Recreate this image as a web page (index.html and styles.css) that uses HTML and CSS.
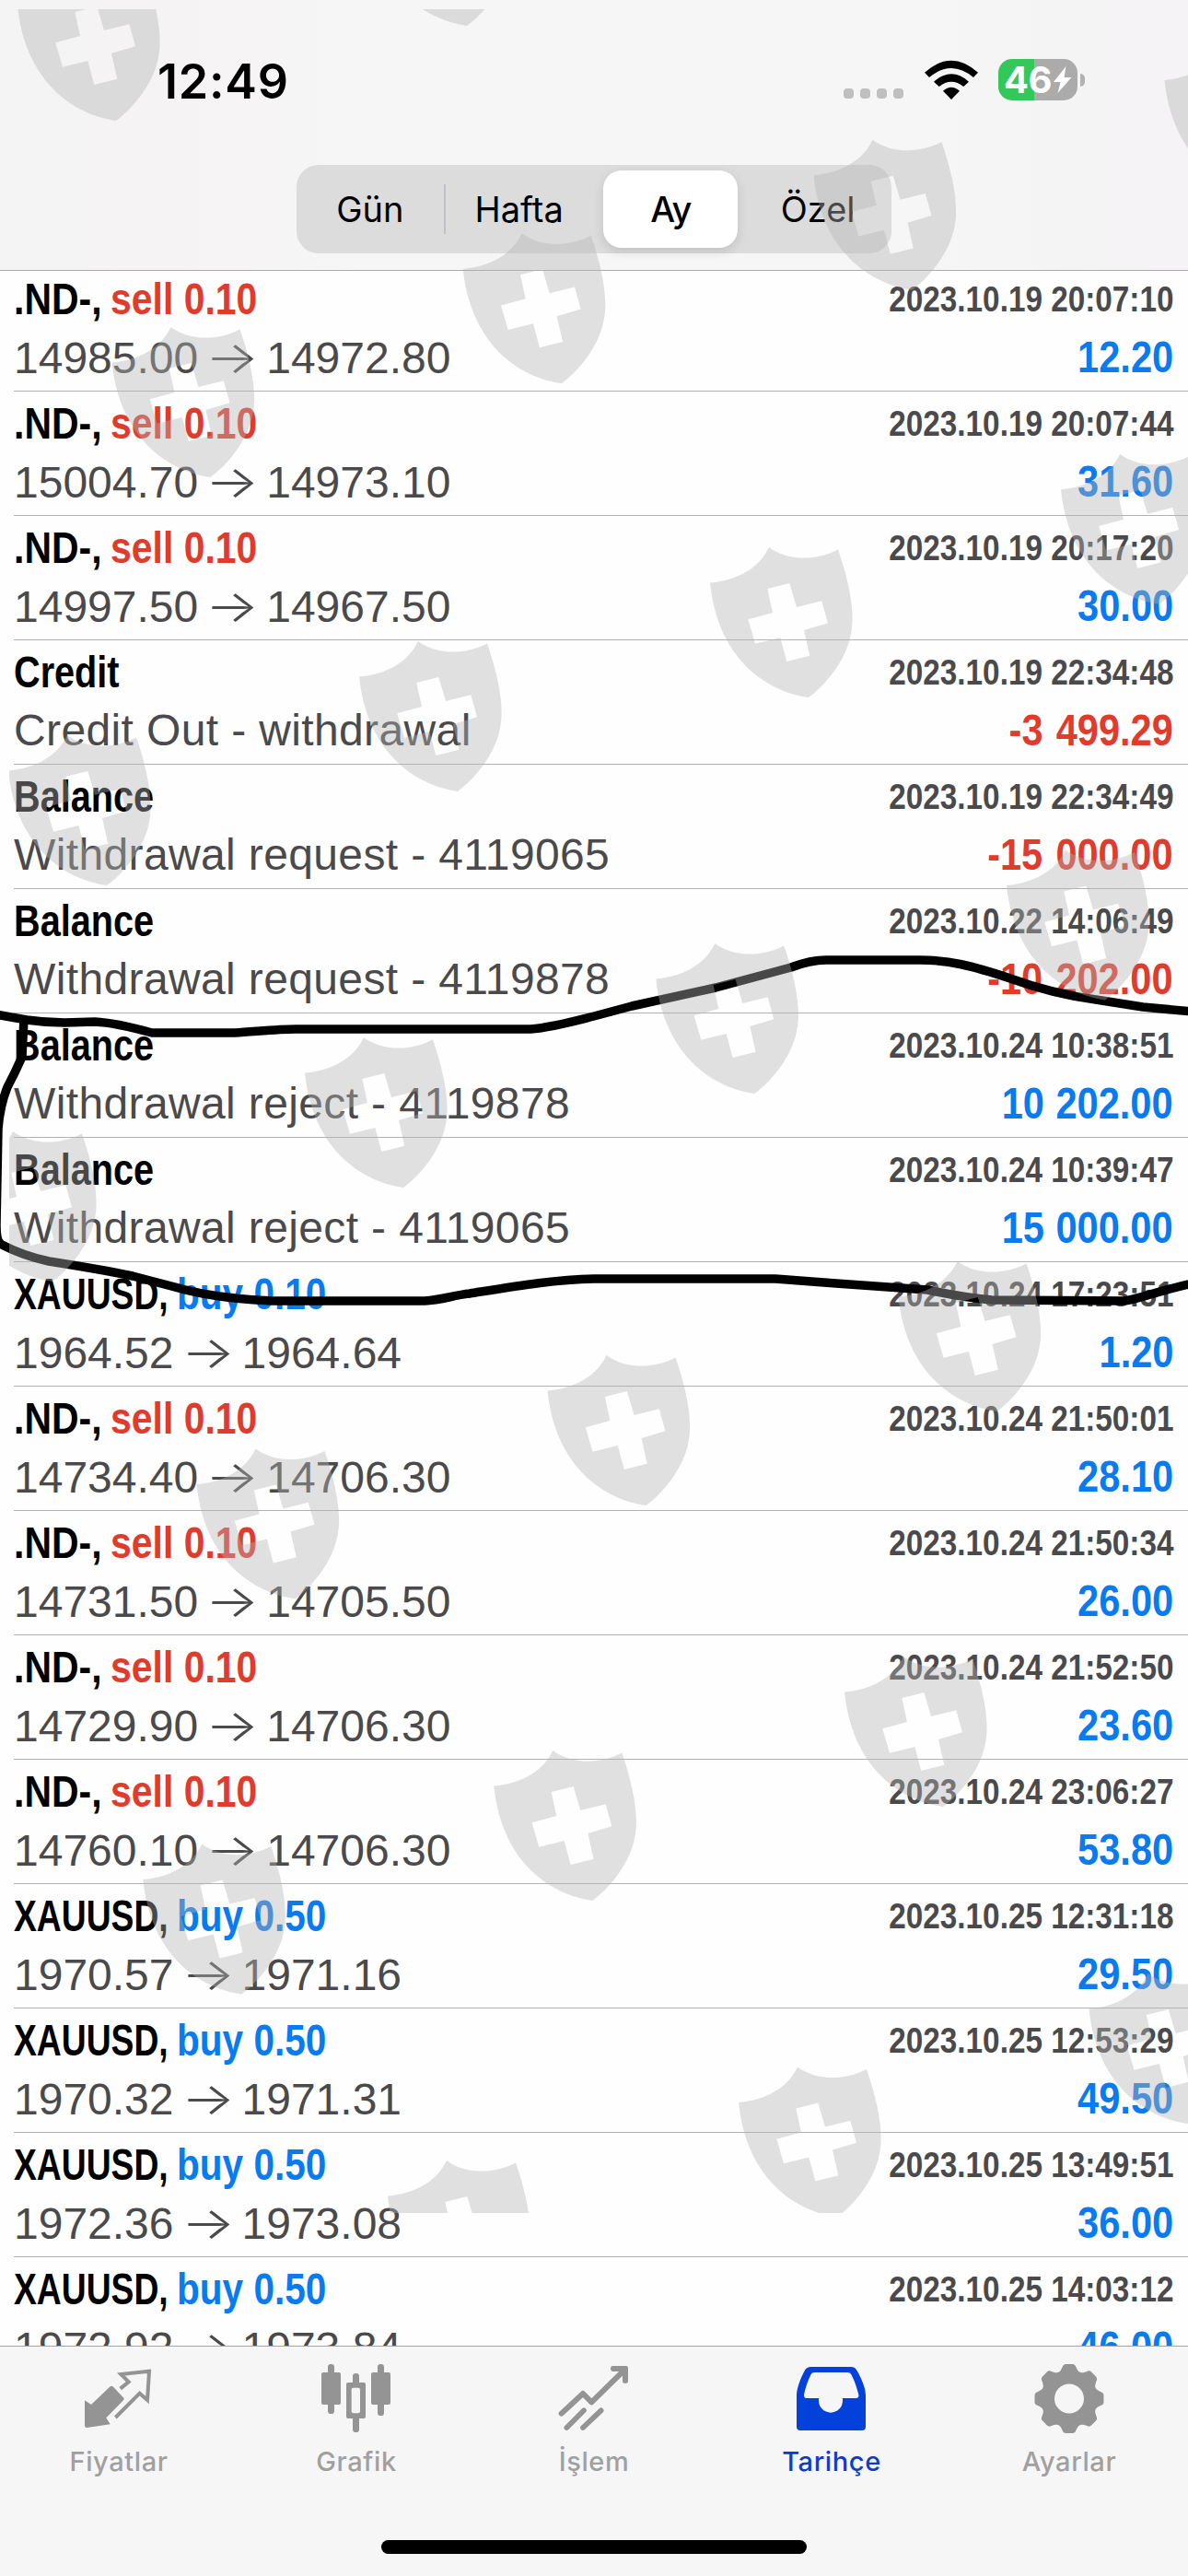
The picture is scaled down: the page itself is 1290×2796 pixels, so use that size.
FILE: index.html
```html
<!DOCTYPE html>
<html lang="tr">
<head>
    <meta charset="UTF-8">
    <meta name="viewport" content="width=device-width, initial-scale=1.0">
    <title>Tarihçe</title>
    <link rel="stylesheet" href="styles.css">
</head>
<body>
    <header class="header">
        <div class="status-bar">
            <div class="clock">12:49</div>
            <div class="status-icons">
                <div class="dots"><i></i><i></i><i></i><i></i></div>
                <svg class="wifi" width="58" height="44" viewBox="311 74 174 130">
                    <path d="M311 114 Q398 36 485 114 L470 130 Q398 70 326 130 Z"/>
                    <path d="M341 144 Q398 94 455 144 L438 160 Q398 128 358 160 Z"/>
                    <path d="M371 174 Q398 150 425 174 L398 202 Z"/>
                </svg>
                <div class="battery">
                    <span>46</span>
                    <svg width="22" height="32" viewBox="0 0 22 32"><path d="M14.5 1 L1 18 H8.500 L5.500 30 L20.500 13 H12.500 Z"/></svg>
                </div>
                <div class="battery-cap"></div>
            </div>
        </div>
        <div class="segments">
            <div class="segment">Gün</div>
            <div class="segment divided">Hafta</div>
            <div class="segment active"><span>Ay</span></div>
            <div class="segment">Özel</div>
        </div>
    </header>

    <main class="list" id="list"></main>

    <nav class="tabs">
        <div class="tab">
            <svg viewBox="27 21 240 240">
                <path class="fill" d="M36 151 L57 165 L119 106 Q124 102 129 107 L163 143 Q166 147 162 151 L106 208 L119 229 L43 240 Q36 240 36 233 Z"/>
                <path class="line thin" d="M152 113 L179 91 L154 66 L246 56 L240 150 L215 128 L136 207"/>
            </svg>
            <span>Fiyatlar</span>
        </div>
        <div class="tab">
            <svg viewBox="801 21 240 240">
                <rect class="fill" x="807" y="60" width="63" height="105" rx="6"/>
                <rect class="fill" x="828" y="33" width="21" height="162" rx="10"/>
                <rect class="fill" x="969" y="60" width="63" height="105" rx="6"/>
                <rect class="fill" x="990" y="33" width="21" height="168" rx="10"/>
                <rect class="fill" x="909" y="63" width="21" height="45" rx="10"/>
                <rect class="fill" x="909" y="195" width="21" height="60" rx="10"/>
                <rect class="fill" x="888" y="93" width="63" height="117" rx="6"/>
                <rect class="hole" x="905" y="110" width="28" height="83" rx="6"/>
            </svg>
            <span>Grafik</span>
        </div>
        <div class="tab">
            <svg viewBox="45 21 240 240">
                <path class="line" d="M59 194 L129 129 L157 157 L264 52"/>
                <path class="fill" d="M226 39 H270 Q276 39 276 45 V88 Q276 96 267 96 Q258 96 258 88 V57 H227 Q219 56 219 48 Q219 39 226 39 Z"/>
                <path class="line cut" d="M76 240 L132 184"/>
                <path class="line cut" d="M129 240 L188 184"/>
            </svg>
            <span>İşlem</span>
        </div>
        <div class="tab active">
            <svg viewBox="819 21 240 240">
                <path class="fill" fill-rule="evenodd" d="M872 42 H1002 Q1014 42 1020 52 C1036 78 1050 112 1050 135 V237 Q1050 249 1038 249 H837 Q825 249 825 237 V135 C825 112 838 78 852 53 Q858 42 872 42 Z M883 60 Q875 60 872 66 C861 88 853 112 849 133 Q848 144 857 144 H897 V152 A39 39 0 0 0 975 152 V144 H1020 Q1029 143 1027 133 C1021 112 1015 88 1003 67 Q999 60 991 60 Z"/>
            </svg>
            <span>Tarihçe</span>
        </div>
        <div class="tab">
            <svg viewBox="-40 -41.5 80 80">
                <g id="gear"></g>
                <circle class="fill" r="31"/>
                <circle class="hole" r="16"/>
            </svg>
            <span>Ayarlar</span>
        </div>
        <div class="home-bar"></div>
    </nav>

    <!-- marker strokes over the list -->
    <svg class="overlay" viewBox="0 0 1290 2796">
        <g class="marker">
            <path d="M-5 1101 L29 1107 Q50 1110 70 1110 L103 1109 Q125 1110 165 1121 L255 1121 C275 1120 300 1117 321 1117 L576 1117 C600 1115 625 1108 645 1103 L686 1092 L777 1072 L859 1050 Q880 1042 897 1042 L999 1042 C1030 1042 1055 1048 1097 1062 C1130 1074 1160 1081 1190 1085 L1241 1093 L1295 1098"/>
            <path d="M26 1106 L24 1147 Q16 1165 8 1180 Q0 1200 -2 1225 L-4 1330 Q-4 1348 2 1351 Q25 1363 53 1369 C85 1374 115 1379 144 1385 L190 1397 Q230 1409 296 1412 L461 1412 C480 1411 492 1406 510 1404 C560 1396 600 1389 645 1388 L842 1388 L908 1393 L1007 1400 Q1045 1408 1077 1411 L1221 1412 C1240 1409 1265 1399 1295 1393"/>
        </g>
    </svg>

    <svg class="overlay" viewBox="0 0 1290 2796">
        <defs>
            <clipPath id="area"><rect x="10" y="10" width="1280" height="2392"/></clipPath>
            <path id="shield" fill-rule="evenodd" d="M0 38.500 C30 36 54 22 64 0 C84 15 115 15 139 2.500 C151 37 158 72 153 94 C149 118 130 146 107 163 C58 156 8 118 0 38.500 Z M62.300 45 L68 71 L41.300 78.300 L49 104.700 L76.300 98 L83.300 124 L108.300 117.700 L102 90 L128 82.300 L121.300 58.300 L94 65 L86.300 39 Z"/>
        </defs>
        <g class="shields" id="shields" clip-path="url(#area)"></g>
    </svg>

    <script>
        const rows = [
            ['.ND-', 'sell 0.10', '14985.00', '14972.80', '2023.10.19 20:07:10', '12.20'],
            ['.ND-', 'sell 0.10', '15004.70', '14973.10', '2023.10.19 20:07:44', '31.60'],
            ['.ND-', 'sell 0.10', '14997.50', '14967.50', '2023.10.19 20:17:20', '30.00'],
            ['Credit', '', 'Credit Out - withdrawal', '', '2023.10.19 22:34:48', '-3 499.29'],
            ['Balance', '', 'Withdrawal request - 4119065', '', '2023.10.19 22:34:49', '-15 000.00'],
            ['Balance', '', 'Withdrawal request - 4119878', '', '2023.10.22 14:06:49', '-10 202.00'],
            ['Balance', '', 'Withdrawal reject - 4119878', '', '2023.10.24 10:38:51', '10 202.00'],
            ['Balance', '', 'Withdrawal reject - 4119065', '', '2023.10.24 10:39:47', '15 000.00'],
            ['XAUUSD', 'buy 0.10', '1964.52', '1964.64', '2023.10.24 17:23:51', '1.20'],
            ['.ND-', 'sell 0.10', '14734.40', '14706.30', '2023.10.24 21:50:01', '28.10'],
            ['.ND-', 'sell 0.10', '14731.50', '14705.50', '2023.10.24 21:50:34', '26.00'],
            ['.ND-', 'sell 0.10', '14729.90', '14706.30', '2023.10.24 21:52:50', '23.60'],
            ['.ND-', 'sell 0.10', '14760.10', '14706.30', '2023.10.24 23:06:27', '53.80'],
            ['XAUUSD', 'buy 0.50', '1970.57', '1971.16', '2023.10.25 12:31:18', '29.50'],
            ['XAUUSD', 'buy 0.50', '1970.32', '1971.31', '2023.10.25 12:53:29', '49.50'],
            ['XAUUSD', 'buy 0.50', '1972.36', '1973.08', '2023.10.25 13:49:51', '36.00'],
            ['XAUUSD', 'buy 0.50', '1972.92', '1973.84', '2023.10.25 14:03:12', '46.00']
        ];
        const nameClass = { '.ND-': 'nd', 'XAUUSD': 'xau' };

        document.getElementById('list').innerHTML = rows.map(([name, side, from, to, date, amount]) => `
            <div class="row">
                <div class="line-top">
                    <div class="symbol ${nameClass[name] || ''}"><b>${name}${side ? ',' : ''}</b></div>
                    <div class="side ${side.split(' ')[0]}">${side}</div>
                    <div class="date">${date}</div>
                </div>
                <div class="line-bottom">
                    <div class="detail ${to ? '' : 'note'}">${from}${to ? `<span class="arrow">→</span>${to}` : ''}</div>
                    <div class="amount ${amount[0] === '-' ? 'negative' : ''}">${amount}</div>
                </div>
            </div>`).join('');

        // watermark shields
        const spots = [
            [19, -32], [400, -135], [1264.5, 48.5],
            [883.5, 151.7], [502.7, 253.3], [121.5, 355],
            [1152, 492.7], [771, 594], [390, 696], [9, 798],
            [1093, 922.5], [712.3, 1024], [331, 1126], [-50, 1228],
            [975.5, 1369], [594.5, 1471], [213.5, 1572.5],
            [917, 1798], [536.3, 1900], [155.3, 2001.6],
            [1182.5, 2142], [802, 2243.5], [421, 2345]
        ];
        document.getElementById('shields').innerHTML =
            spots.map(([x, y]) => `<use href="#shield" x="${x}" y="${y}"/>`).join('');

        let teeth = '';
        for (let a = 0; a < 360; a += 45) {
            teeth += `<path class="fill" d="M-12.5 -27 Q-8.500 -31 -7.500 -34 Q-6.500 -37.500 -3.500 -37.500 H3.500 Q6.500 -37.500 7.500 -34 Q8.500 -31 12.500 -27 Z" transform="rotate(${a})"/>`;
        }
        document.getElementById('gear').innerHTML = teeth;
    </script>
</body>
</html>
```
FILE: styles.css
```css
* {
    box-sizing: border-box;
}
body {
    margin: 0;
    width: 1290px;
    height: 2796px;
    position: relative;
    display: flex;
    flex-direction: column;
    overflow: hidden;
    background: #fefefe;
    font-family: "Liberation Sans", Arial, sans-serif;
}
.header {
    height: 294px;
    background: linear-gradient(90deg, #f4f4f5, #f6f3f4 14%, #f6f6f6 30%, #f6f6f6 75%, #f5f3f5);
    border-bottom: 1px solid #acacac;
    font-family: Inter, sans-serif;
    display: flex;
    flex-direction: column;
    align-items: center;
    flex-shrink: 0;
}
.status-bar {
    width: 100%;
    height: 179px;
    padding: 59px 113px 0 171px;
    display: flex;
    justify-content: space-between;
}
.clock {
    font-size: 52px;
    line-height: 59px;
    font-weight: 600;
    letter-spacing: 0.8px;
}
.status-icons {
    display: flex;
    height: 55px;
    align-items: center;
}
.dots {
    display: flex;
    gap: 7px;
    margin: 29px 23px 0 0;
}
.dots i {
    width: 11px;
    height: 11px;
    border-radius: 4px;
    background: #bfbfbf;
}
.wifi {
    margin-right: 22px;
}
.battery {
    width: 86px;
    height: 45px;
    border-radius: 15px;
    background: linear-gradient(90deg, #34c759 39px, #ababab 39px);
    display: flex;
    align-items: center;
    padding-left: 6px;
    color: #fff;
    font-size: 40px;
    font-weight: 700;
    letter-spacing: -0.5px;
}
.battery svg {
    margin-left: 1px;
    fill: #fff;
}
.battery-cap {
    width: 5px;
    height: 14px;
    margin-left: 3px;
    margin-right: -1px;
    border-radius: 0 6px 6px 0;
    background: #b2b2b2;
}
.segments {
    width: 646px;
    height: 96px;
    border-radius: 24px;
    background: #dcdcdd;
    display: flex;
    align-items: center;
}
.segment {
    flex: 1;
    height: 84px;
    display: flex;
    align-items: center;
    justify-content: center;
    font-size: 38px;
    color: #000;
}
.segment.divided {
    height: 54px;
    padding-right: 5px;
    border-left: 2px solid #c0c0c6;
}
.segment.active span {
    width: 146px;
    height: 84px;
    line-height: 84px;
    text-align: center;
    border-radius: 20px;
    background: #fff;
    font-weight: 500;
    letter-spacing: -1px;
    box-shadow: 0 4px 12px rgba(0,0,0,0.12);
}
.list {
    flex: 1;
    min-height: 0;
    overflow: hidden;
}
.row {
    height: 135px;
    margin-left: 15px;
    padding: 2px 16px 0 0;
    border-bottom: 1px solid #b2b2b2;
}
.row:first-child {
    margin-top: -4px;
}
.line-top, .line-bottom {
    display: flex;
    white-space: nowrap;
}
.line-top {
    height: 66px;
    line-height: 65px;
    font-size: 48px;
    font-weight: bold;
}
/* condensed faces */
.symbol b, .side, .date, .amount {
    transform-origin: left;
}
.symbol b {
    display: inline-block;
    transform: scaleX(0.826);
}
.symbol.nd {
    width: 105px;
}
.symbol.nd b {
    transform: scaleX(0.853);
}
.symbol.xau {
    width: 177px;
}
.symbol.xau b {
    transform: scaleX(0.776);
}
.side {
    transform: scaleX(0.853);
}
.buy {
    transform: scaleX(0.845);
}
.sell {
    color: #df3c2e;
}
.buy {
    color: #0a7aef;
}
.date {
    margin-left: auto;
    font-size: 38.5px;
    color: #4a4a4c;
    transform: scaleX(0.865);
    transform-origin: right;
}
.line-bottom {
    justify-content: space-between;
    height: 59px;
    line-height: 59px;
    font-size: 48px;
    color: #4a4a4c;
}
.detail.note {
    letter-spacing: 0.37px;
}
.arrow {
    display: inline-block;
    width: 74px;
    text-align: center;
    font-family: Inter, sans-serif;
    font-weight: 300;
    transform: scaleX(1.28);
}
.amount {
    font-weight: bold;
    color: #0a7aef;
    word-spacing: 1px;
    transform: scaleX(0.866);
    transform-origin: right;
}
.amount.negative {
    color: #df3c2e;
    word-spacing: 3px;
}
.tabs {
    height: 250px;
    flex-shrink: 0;
    position: relative;
    display: flex;
    border-top: 1px solid #a6a6a6;
    background: #f6f6f6;
}
.tab {
    flex: 1;
    padding-top: 15px;
    display: flex;
    flex-direction: column;
    align-items: center;
    font-family: Inter, sans-serif;
    font-size: 29px;
    font-weight: 450;
    line-height: 36px;
    letter-spacing: 0.6px;
    color: #a0a0a0;
}
.tab svg {
    width: 80px;
    height: 80px;
    margin-bottom: 12px;
}
.tab.active {
    color: #103cc4;
    font-weight: 500;
}
.fill {
    fill: #949494;
}
.tab.active .fill {
    fill: #0341da;
}
.hole {
    fill: #f6f6f6;
}
.line {
    fill: none;
    stroke: #949494;
    stroke-width: 18;
    stroke-linecap: round;
    stroke-linejoin: round;
}
.line.thin {
    stroke-width: 12;
    stroke-linecap: butt;
    stroke-linejoin: miter;
}
.line.cut {
    stroke-width: 17;
}
.home-bar {
    position: absolute;
    left: 414px;
    bottom: 24px;
    width: 462px;
    height: 15px;
    border-radius: 8px;
    background: #000;
}
.overlay {
    position: absolute;
    left: 0;
    top: 0;
    width: 1290px;
    height: 2796px;
    pointer-events: none;
}
.marker {
    fill: none;
    stroke: #000;
    stroke-width: 9.5;
    stroke-linejoin: round;
}
.shields {
    fill: rgba(180, 180, 180, 0.4);
}
```
